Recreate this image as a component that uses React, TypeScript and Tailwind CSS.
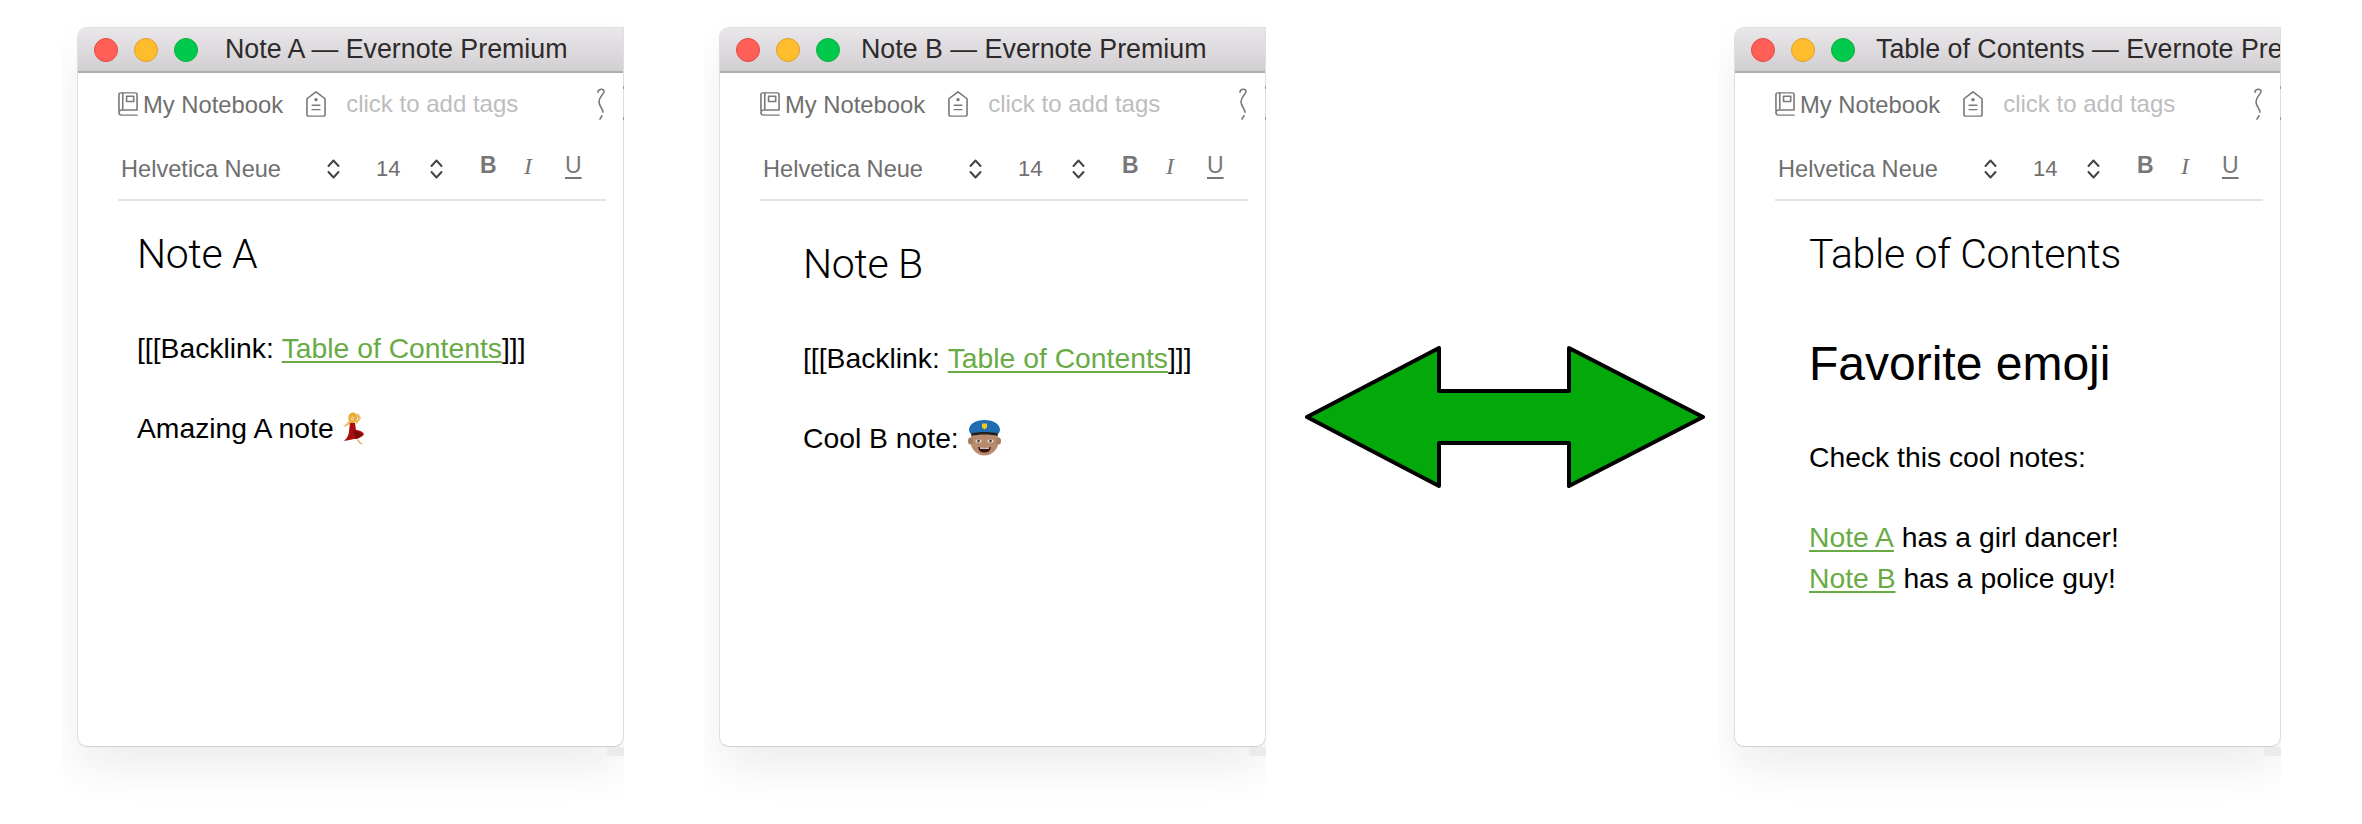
import React from 'react';

const sans = '[font-family:"Liberation_Sans",Arial,sans-serif]';

function NotebookIcon() {
  return (
    <svg width="20" height="24" viewBox="0 0 21 28" preserveAspectRatio="none" fill="none" stroke="#7a7a7a" strokeWidth="1.7" strokeLinejoin="round" strokeLinecap="round">
      <path d="M1 22V3a2 2 0 0 1 2-2h15a2 2 0 0 1 2 2v18H4a3 3 0 0 0-3 3 3 3 0 0 0 3 3h16" />
      <path d="M5 1v19" />
      <rect x="9" y="5" width="7.5" height="6" />
    </svg>
  );
}

function TagIcon() {
  return (
    <svg width="20" height="26" viewBox="0 0 21 30" preserveAspectRatio="none" fill="none" stroke="#7a7a7a" strokeWidth="1.7" strokeLinejoin="round" strokeLinecap="round">
      <path d="M10.5 1 20 9v18a2 2 0 0 1-2 2H3a2 2 0 0 1-2-2V9z" />
      <circle cx="10.5" cy="10" r="1" fill="#7a7a7a" />
      <path d="M6.5 16.5h8M6.5 21.5h8" />
    </svg>
  );
}

function Stepper() {
  return (
    <svg width="13" height="20" viewBox="0 0 13 20" fill="none" stroke="#444" strokeWidth="2" strokeLinecap="round" strokeLinejoin="round">
      <path d="M1.5 7 6.500 1.500l5 5.500M1.500 13l5 5.500 5-5.500" />
    </svg>
  );
}

// the cut-off reminder glyph at the right end of the tag row
function Squiggle() {
  return (
    <svg width="8" height="32" viewBox="0 0 8 37" preserveAspectRatio="none" fill="none" stroke="#777" strokeWidth="1.6" strokeLinecap="round">
      <path d="M1 5c0-4 6-5 6-1 0 3-5 6-5 12 0 5 4 8 4 12M5 32l-2 4" />
    </svg>
  );
}

function Dancer() {
  return (
    <svg width="23" height="33" viewBox="0 0 23 33" className="inline-block">
      {/* hair */}
      <path d="M7 3c1-2 4-3 6-2 2 1 2 3 2 5s-1 4-3 5c-2 1-4 0-5-2-1-2-1-4 0-6z" fill="#e6ad2e" />
      {/* raised arms */}
      <path d="M8 12 3 15l-1-1 3-3 3-3z" fill="#edb96a" />
      <path d="M13 10l3-3-2-4 2-2 3 5-4 6z" fill="#edb96a" />
      <ellipse cx="10.500" cy="6.500" rx="2" ry="2.500" fill="#f2c37c" />
      {/* dress */}
      <path d="M8 11h5l1 7c3 0 6 1 8 4-1 2-2 2-3 3-3 2-5 2-7 2-3 1-6 1-10 2 3-3 5-6 5-10z" fill="#a80f0e" />
      <path d="M11 18c3 1 7 2 9 5l-6 4z" fill="#7a0909" />
      {/* legs */}
      <path d="M16 27l3 4 3 1.500-4-.5-3-4z" fill="#e3a85c" />
    </svg>
  );
}

function Officer() {
  return (
    <svg width="35" height="36" viewBox="0 0 35 36" className="inline-block">
      <ellipse cx="17.500" cy="21" rx="14" ry="14.500" fill="#b98b6e" />
      <ellipse cx="3.500" cy="21" rx="2.500" ry="3.500" fill="#a87c60" />
      <ellipse cx="31.500" cy="21" rx="2.500" ry="3.500" fill="#a87c60" />
      <path d="M2 9C3 3 10 0 17.500 0S32 3 33 9c0 3-1 4-2 5-6-2-21-2-27 0-1-1-2-2-2-5z" fill="#1f6db3" />
      <path d="M4 13.500c6-2 21-2 27 0l-.5 2.500c-6-2-20-2-26 0z" fill="#23201f" />
      <path d="M15 3.500h5v4l-2.500 2L15 7.500z" fill="#f2c81f" />
      <ellipse cx="11.500" cy="21" rx="3" ry="1.800" fill="#e8e2da" />
      <ellipse cx="23.500" cy="21" rx="3" ry="1.800" fill="#e8e2da" />
      <circle cx="11.500" cy="21" r="1.400" fill="#5a4030" />
      <circle cx="23.500" cy="21" r="1.400" fill="#5a4030" />
      <path d="M11 27c4 1.200 9 1.200 13 0-1 4.500-3 5.500-6.500 5.500S12 31.500 11 27z" fill="#3a140c" />
      <path d="M13 27.500c3 .6 6 .6 9 0v1.200h-9z" fill="#fff" />
    </svg>
  );
}

function Link({ children }: { children: React.ReactNode }) {
  return <span className="text-[#68ab45] underline decoration-[1.5px] underline-offset-[3px]">{children}</span>;
}

type WindowProps = {
  title: string;
  titleLeft: string;
  bodyLeft: string;
  children: React.ReactNode;
};

function NoteWindow({ title, titleLeft, bodyLeft, children }: WindowProps) {
  return (
    <div className="relative h-[808px] w-[562px] shrink-0 overflow-hidden pl-[15px] pt-[11px]">
      <div className="flex h-[720px] w-[547px] flex-col overflow-hidden rounded-tl-[10px] rounded-b-[10px] border border-[#dedede] border-b-[#cfcfcf] bg-white shadow-[0_22px_44px_rgba(0,0,0,0.07)]">
        <div className="flex h-[45px] shrink-0 items-center border-b-2 border-[#aeaeae] bg-gradient-to-b from-[#e9e7e9] to-[#d1cfd1] pl-[16px]">
          <span className="h-6 w-6 shrink-0 rounded-full border border-[#e5473f] bg-[#ff5f57]" />
          <span className="ml-4 h-6 w-6 shrink-0 rounded-full border border-[#e0a028] bg-[#ffbd2e]" />
          <span className="ml-4 h-6 w-6 shrink-0 rounded-full border border-[#0fae3c] bg-[#00ca4e]" />
          <span className={`${titleLeft} whitespace-nowrap text-[26.800px] leading-none text-[#2e2a2b] ${sans}`}>{title}</span>
        </div>

        <div className={`mr-[17px] ml-[40px] flex h-[66px] shrink-0 items-center pb-[4px] ${sans}`}>
          <NotebookIcon />
          <span className="ml-[5px] mt-[1px] whitespace-nowrap text-[23.800px] text-[#6f6f6f]">My Notebook</span>
          <span className="ml-[23px]"><TagIcon /></span>
          <span className="ml-[20px] whitespace-nowrap text-[24px] text-[#bdbdbd]">click to add tags</span>
          <span className="ml-auto mr-[1px]"><Squiggle /></span>
        </div>

        <div className={`mr-[17px] ml-[40px] flex h-[62px] shrink-0 items-center border-b-2 border-[#e4e4e4] pl-[3px] text-[#6f6f6f] ${sans}`}>
          <span className="mt-[1px] w-[206px] whitespace-nowrap text-[23.600px]">Helvetica Neue</span>
          <Stepper />
          <span className="mb-[2px] ml-[36px] w-[54px] text-[22px]">14</span>
          <Stepper />
          <span className="ml-[37px] mb-[7px] w-[44px] text-[23px] font-bold text-[#777]">B</span>
          <span className="mb-[7px] w-[41px] text-[24px] italic text-[#777]" style={{ fontFamily: '"Liberation Serif", serif' }}>I</span>
          <span className="mb-[7px] text-[23px] underline underline-offset-[4px] text-[#777]">U</span>
        </div>

        <div className={`${bodyLeft} flex flex-col text-black ${sans}`}>{children}</div>
      </div>
      {/* leftovers of the screenshot crop along the right edge */}
      <div className="absolute left-[545px] top-[731px] h-[9px] w-[17px] bg-[#ebebeb]" />
      <div className="absolute left-[561px] top-[70px] h-[3px] w-[1px] bg-[#999999]" />
      <div className="absolute left-[561px] top-[101px] h-[3px] w-[1px] bg-[#999999]" />
    </div>
  );
}

function NoteTitle({ children, top }: { children: React.ReactNode; top: string }) {
  return <div className={`${top} whitespace-nowrap text-[41px] font-light leading-[48px] tracking-[-0.3px] [font-family:"Roboto","Liberation_Sans",sans-serif]`}>{children}</div>;
}

function Line({ children, top }: { children: React.ReactNode; top: string }) {
  return <div className={`${top} flex h-[40px] items-center whitespace-pre text-[28.300px] leading-[40px]`}>{children}</div>;
}

function Arrow() {
  return (
    <svg width="400" height="142" viewBox="0 0 400 142" className="mt-[330px] ml-[39px] shrink-0">
      <path
        d="M2 71 134 2v43h130V2l134 69-134 69V97H134v43z"
        fill="#03a90b"
        stroke="#000"
        strokeWidth="4"
        strokeLinejoin="round"
      />
    </svg>
  );
}

export default function App() {
  return (
    <div className="flex h-[824px] w-[2362px] overflow-hidden bg-white pt-[16px] pl-[62px]">
      <NoteWindow title="Note A — Evernote Premium" titleLeft="ml-[27px]" bodyLeft="pl-[59px]">
        <NoteTitle top="mt-[29px]">Note A</NoteTitle>
        <Line top="mt-[50px]">[[[Backlink: <Link>Table of Contents</Link>]]]</Line>
        <Line top="mt-[40px]">Amazing A note <Dancer /></Line>
      </NoteWindow>

      <div className="ml-[80px]">
        <NoteWindow title="Note B — Evernote Premium" titleLeft="ml-[21px]" bodyLeft="pl-[83px]">
          <NoteTitle top="mt-[39px]">Note B</NoteTitle>
          <Line top="mt-[50px]">[[[Backlink: <Link>Table of Contents</Link>]]]</Line>
          <Line top="mt-[40px]">Cool B note: <Officer /></Line>
        </NoteWindow>
      </div>

      <Arrow />

      <div className="ml-[14px]">
        <NoteWindow title="Table of Contents — Evernote Premium" titleLeft="ml-[21px]" bodyLeft="pl-[74px]">
          <NoteTitle top="mt-[29px]">Table of Contents</NoteTitle>
          <div className="mt-[56px] whitespace-nowrap text-[48px] leading-[60px]">Favorite emoji</div>
          <Line top="mt-[43px]">Check this cool notes:</Line>
          <Line top="mt-[40px]"><Link>Note A</Link> has a girl dancer!</Line>
          <Line top="mt-[1px]"><Link>Note B</Link> has a police guy!</Line>
        </NoteWindow>
      </div>
    </div>
  );
}
